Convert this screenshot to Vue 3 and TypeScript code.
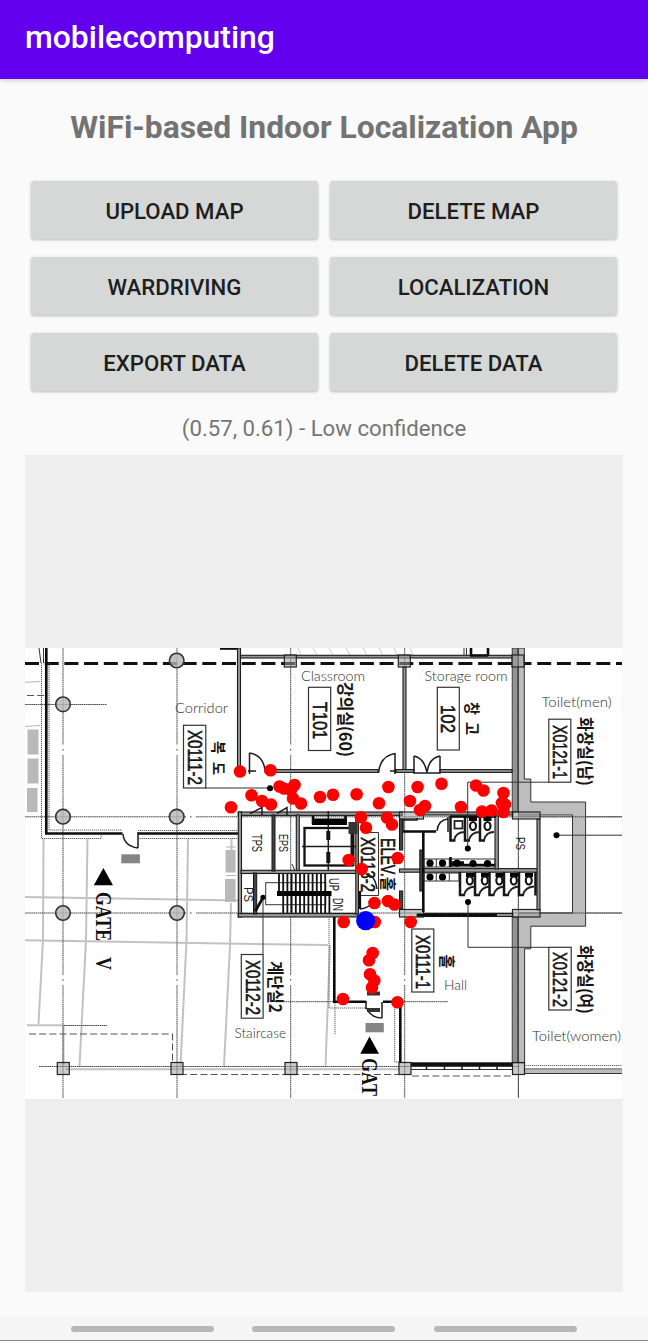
<script setup lang="ts">
interface PlanLabel {
  text: string
  x: number
  y: number
  length: number
  size: number
  kind: string
}

type Point = [number, number]
type Box = [number, number, number, number]

const actions: string[] = [
  'Upload map', 'Delete map', 'Wardriving', 'Localization', 'Export data', 'Delete data',
]

const samples: Point[] = [
  [240, 771.5], [270.5, 770.3], [231, 807.3], [279.5, 786.5], [284, 788.5], [294.5, 785], [291, 790],
  [251.5, 795.3], [262, 801], [271, 804.5], [293, 798.5], [301, 803.5], [320, 797], [333, 794.7],
  [356.6, 794.3], [379, 803.3], [388.4, 787], [417.6, 787], [410, 801], [441.5, 783.7], [476, 785.5],
  [483.5, 790.5], [503.5, 793], [461, 807], [425, 806], [420, 810], [502, 803], [505, 804.5],
  [482, 811.5], [491.5, 810.5], [503.5, 812], [361, 817.3], [366, 827.7], [387, 817.5], [392, 824.5],
  [348.7, 860], [397.7, 858], [361.7, 869], [374.5, 903], [388, 901], [394.5, 904.5], [343.7, 922],
  [374.8, 922], [410.7, 922], [372.7, 953], [369, 960.3], [370, 974.3], [374.3, 980.5], [372, 987.5],
  [343, 999], [397.5, 1002.2],
]

const columns: Point[] = [[176.7, 660.5], [63, 704.3], [63, 816.7], [176.7, 816.7], [63, 913], [177, 913]]
const piers: Box[] = [
  [284.3, 655, 12, 12], [398.3, 655, 12, 12], [512, 655, 12, 12], [57.3, 1062.5, 12, 12],
  [171, 1062.5, 12, 12], [285, 1062.5, 12, 12], [399, 1062.5, 12, 12], [512.5, 1062.5, 12, 12],
  [399.5, 812, 24, 7], [512.5, 812, 27.5, 7], [399.5, 909.5, 24, 7.5], [512.5, 909.5, 27.5, 7.5],
]
const axes: number[] = [63, 177, 290.7, 404.7, 518.4]
const greyBlocks: Box[] = [
  [27.5, 729.5, 11, 25], [27.5, 758.5, 11, 25], [27, 788, 10.5, 24], [225.5, 850, 10, 22.5], [225, 879, 10.5, 23],
]
const walls: Box[] = [
  [237.5, 648, 3, 122], [240.5, 655.3, 272, 2.7], [403, 667, 3, 103], [265, 769.6, 113, 2.8],
  [395, 769.6, 19, 2.8], [440, 769.6, 72, 2.8], [238.3, 812, 164, 3.4], [238.3, 812, 3.2, 105],
  [238.3, 913.5, 119, 3.5], [296.3, 815, 3, 56], [241, 870.3, 116, 3.2],
  [355.8, 816, 2.6, 98], [399.5, 869, 24, 3.2], [423, 868.6, 115, 3.6], [495, 816, 3.3, 53],
  [537, 819, 3, 91], [423, 812, 90, 3], [417, 913.5, 96, 3],
]
const solidWalls: Box[] = [
  [272, 815, 3, 56], [253.5, 873, 3.2, 41], [399.5, 819, 3.2, 31], [399.5, 891, 3.2, 18], [419.8, 850, 3.4, 41],
]
const roomBoxes: Box[] = [
  [183.5, 725.3, 22.3, 62.7], [308.5, 687.3, 22.2, 63.2], [437.3, 687.3, 22, 62.7],
  [548.8, 719.2, 22, 63], [241.3, 954.5, 21.8, 63.7], [411.8, 929, 22, 63], [548.8, 947.3, 22.4, 62.7],
]
const topStalls: number[] = [450.5, 465, 480]
const lowerStalls: number[] = [460, 475, 489.5, 504, 519]
const sinks: Point[] = [
  [430, 863.2], [442.5, 863.2], [457, 863.2], [473, 863.5], [487.5, 863.5], [430, 877], [442.5, 877],
]

const roomNames: PlanLabel[] = [
  { text: 'Corridor', x: 175, y: 713, length: 53, size: 14.5, kind: 'name' },
  { text: 'Classroom', x: 301, y: 681, length: 64, size: 14.5, kind: 'name' },
  { text: 'Storage room', x: 424.5, y: 681, length: 83, size: 14.5, kind: 'name' },
  { text: 'Toilet(men)', x: 541.5, y: 707, length: 70, size: 14.5, kind: 'name' },
  { text: 'Toilet(women)', x: 532, y: 1040.5, length: 89, size: 14.5, kind: 'name' },
  { text: 'Hall', x: 444, y: 989.5, length: 23, size: 14.5, kind: 'name' },
  { text: 'Staircase', x: 234.5, y: 1037.5, length: 51.5, size: 14.5, kind: 'name' },
]

// Labels printed sideways: x is the baseline, y the first letter's top end.
const sideLabels: PlanLabel[] = [
  { text: 'X0111-2', x: 187.5, y: 730, length: 55, size: 20, kind: 'code' },
  { text: 'T101', x: 312.5, y: 702, length: 37, size: 20, kind: 'code' },
  { text: '102', x: 441, y: 705, length: 28, size: 20, kind: 'code' },
  { text: 'X0121-1', x: 552.8, y: 725, length: 54, size: 20, kind: 'code' },
  { text: 'X0112-2', x: 245.5, y: 960, length: 55, size: 20, kind: 'code' },
  { text: 'X0111-1', x: 416, y: 935, length: 54, size: 20, kind: 'code' },
  { text: 'X0121-2', x: 552.8, y: 952, length: 55, size: 20, kind: 'code' },
  { text: 'X0113-2', x: 360.5, y: 837, length: 55, size: 20, kind: 'code' },
  { text: 'ELEV.', x: 381, y: 838, length: 39, size: 20, kind: 'code' },
  { text: '홀', x: 382, y: 877, length: 14, size: 16, kind: 'hangul' },
  { text: '복', x: 213, y: 741, length: 13, size: 15, kind: 'hangul' },
  { text: '도', x: 213, y: 762, length: 13, size: 15, kind: 'hangul' },
  { text: '강의실(60)', x: 338.5, y: 682, length: 75, size: 17.5, kind: 'hangul' },
  { text: '창', x: 465.5, y: 702, length: 13, size: 16, kind: 'hangul' },
  { text: '고', x: 465.5, y: 722, length: 13, size: 16, kind: 'hangul' },
  { text: '화장실(남)', x: 578.5, y: 717, length: 69, size: 17, kind: 'hangul' },
  { text: '화장실(여)', x: 578.5, y: 945, length: 69, size: 17, kind: 'hangul' },
  { text: '계단실2', x: 269, y: 961, length: 52, size: 17, kind: 'hangul' },
  { text: '홀', x: 440.5, y: 954.5, length: 14, size: 16, kind: 'hangul' },
  { text: 'TPS', x: 251.5, y: 834, length: 18, size: 14, kind: 'small' },
  { text: 'EPS', x: 279, y: 834, length: 18, size: 13, kind: 'small' },
  { text: 'PS', x: 243.5, y: 887, length: 15, size: 13, kind: 'small' },
  { text: 'UP', x: 328.5, y: 878, length: 13, size: 14, kind: 'small' },
  { text: 'DN', x: 333, y: 898, length: 13, size: 14, kind: 'small' },
  { text: 'PS', x: 516, y: 837, length: 13, size: 12, kind: 'small' },
  { text: 'GATE', x: 95.5, y: 892, length: 49, size: 23, kind: 'gate' },
  { text: 'V', x: 95.5, y: 957, length: 13, size: 23, kind: 'gate' },
  { text: 'GAT', x: 361.5, y: 1058, length: 38, size: 23, kind: 'gate' },
]
</script>

<template>
  <div class="screen">
    <header class="app-bar">mobilecomputing</header>
    <main class="content">
      <h1 class="title">WiFi-based Indoor Localization App</h1>
      <div class="actions">
        <button v-for="a in actions" :key="a" type="button" class="action">{{ a }}</button>
      </div>
      <p class="status">(0.57, 0.61) - Low confidence</p>
      <div class="map-view">
        <svg class="map" width="598" height="451" viewBox="25 648 598 451">
          <rect x="25" y="648" width="597.3" height="451" fill="#fff" />

          <!-- Outdoor paving and parking lines -->
          <g class="paving">
            <path d="M43.5 839L43 940L38.5 1024M87.5 839L86 940L79.5 1066M188 839L186.5 940L180.5 1066M231.5 839V850M231 903L230 945L224 1066M330 945L325.5 1066" />
            <path d="M25 897L240 900.5M25 940.3L240 943.7L328 945M27 1025.3H64M63.5 1025V1065M66 1069.3H400" />
          </g>
          <path class="fine-grey" d="M25 682.3L40 681.5M25 726.5L40 725.5M226 847H236M226 875.5H236M226 901H236" />
          <path class="hatch" d="M298 648l3 7M313 648l4 7M329 648l4 7M346 648l4 7M363 648l4 7M379 648l4 7M394 648l3 7M410 648l3 7" />
          <rect v-for="(b, i) in greyBlocks" :key="'g' + i" :x="b[0]" :y="b[1]" :width="b[2]" :height="b[3]" fill="#b9b9b9" />

          <!-- Structural axes -->
          <path v-for="x in axes" :key="x" class="axis" :d="`M${x} 648V745M${x} 749v2M${x} 755V975M${x} 979v2M${x} 985V1098`" />
          <path class="axis" d="M25 704.5H107M25 816.8H186M190 816.8h2M196 816.8H622M25 913H186M190 913h2M196 913H622M64 1025.5H107M275 1001.7H334M400 1001.7H448M39 1066.5H520" />
          <path class="long-dash" d="M25 663.4H622" />
          <path class="short-dash" d="M29 1034H172.5V1064M180 1074.5H400M412 1076H512M27 695.5H45" />

          <!-- Corridor room -->
          <path class="thick" d="M46.3 648V833.5H122.5M138 833.5H238" />
          <path class="thin" d="M39 648L41 663M43.5 648V663" />
          <path class="dotted" d="M41.5 663V838.5H101V834M138 838.5H238M49 663V830H122M138 830.5H238" />
          <path class="door" d="M138 832V848M123 834Q124 846 138 848" />
          <rect x="121.3" y="854.3" width="18.6" height="9" fill="#858585" />
          <path class="thick" d="M220 648.5H238" />

          <!-- Outer grey shell -->
          <path class="shell" d="M518.5 648H524.3V779H530.8V802H585.6V926.2H530.8V948.8H524.6V1063H518.5V913H572.5V815H518.5Z" />
          <rect x="512.2" y="648" width="5.6" height="164" class="dark-shell" />
          <rect x="512.2" y="917" width="5.6" height="146" class="dark-shell" />
          <path class="axis" d="M518.4 648V1098M518 816.8H622M518 913H622" />
          <path class="thin" d="M524 1069H622M524 1073.5H622" />
          <rect x="524" y="1070" width="98" height="3" fill="#bbb" />
          <path class="dotted" d="M524 1065.5H622" />

          <!-- Internal walls -->
          <rect v-for="(w, i) in walls" :key="'w' + i" :x="w[0]" :y="w[1]" :width="w[2]" :height="w[3]" class="wall" />
          <rect v-for="(w, i) in solidWalls" :key="'sw' + i" :x="w[0]" :y="w[1]" :width="w[2]" :height="w[3]" class="solid-wall" />
          <rect v-for="(p, i) in piers" :key="'p' + i" :x="p[0]" :y="p[1]" :width="p[2]" :height="p[3]" class="pier" />
          <circle v-for="(c, i) in columns" :key="'c' + i" :cx="c[0]" :cy="c[1]" r="7.3" class="column" />
          <path class="door" d="M249.5 753V774M249.5 753Q263 755 265 770M248 771H256M395 753V774M395 753.5Q380 756 378.5 773M390 771H397M414 756V773H440V756M414 756Q424 758 427 772Q429 758 440 756" />
          <path class="thin" d="M464 648V655M466.5 648V655" />
          <path class="thick" d="M471 648V656M488 648V656M470 655.5H488" />

          <!-- Lift and stairwell -->
          <path class="door" d="M250 813.5L262 807.5V815M277 813.5L287 807.5V815" />
          <rect x="304.5" y="828" width="48" height="37.5" class="lift" />
          <path class="door" d="M328.3 811V870M302 846.5H356" />
          <rect x="312" y="818.5" width="35" height="6.5" />
          <path class="thick" d="M313 815.5V824M345.5 815.5V824" />
          <path class="lift-rail" d="M328.3 831V840M328.3 852V863" />
          <path class="lift-rail" d="M352.5 822V866" />
          <rect x="348.5" y="822" width="9" height="12" fill="#333" />
          <rect x="265.7" y="882.7" width="60" height="22" class="outline" />
          <path class="treads" d="M279 874V892M283.2 874V913M287.4 874V913M291.6 874V913M295.8 874V913M300 874V913M304.2 874V913M308.4 874V913M312.6 874V913M316.8 874V913M321 874V913M325.2 874V913M329.4 892V913" />
          <rect x="277" y="891" width="54.5" height="5" />
          <path class="thick" d="M263 897.5L255.5 911" />
          <path class="thin" d="M263 898V954M366 832.5H378.5V895.5H359M292 864l3 7" />
          <path class="thick" d="M359.8 891V909" />
          <path class="door" d="M366 874Q375 875 377 889M360 909Q370 908 373 901" />

          <!-- Washrooms -->
          <path class="thick" d="M403 831.5H436M423.3 831V912" />
          <path class="door" d="M403 831V820H417V818M437 831Q438 820 448 819M448 817V832" />
          <path v-for="x in topStalls" :key="'t' + x" class="partition" :d="`M${x} 816V840.5h5`" />
          <path class="stall-door" d="M454 840Q456 832 465 832M469 840Q471 832 480 832M484 840Q486 832 494 832" />
          <rect x="454.5" y="821" width="8" height="7.5" class="basin" />
          <path class="thick" d="M450 816.5H496" />
          <g v-for="x in [473, 487.5]" :key="'u' + x" class="toilet">
            <rect :x="x - 4" y="817" width="8" height="4" />
            <ellipse :cx="x" cy="826" rx="3" ry="4" />
          </g>
          <path class="partition" d="M535.5 872V895.5" />
          <g v-for="x in lowerStalls" :key="'l' + x">
            <path class="partition" :d="`M${x} 872V895h5`" />
            <g class="toilet">
              <rect :x="x + 6" y="873" width="8" height="4" />
              <ellipse :cx="x + 9.8" cy="880.5" rx="3" ry="4" />
            </g>
            <path class="stall-door" :d="`M${x + 4} 895q2 -8 11 -8.5`" />
          </g>
          <rect x="424" y="859" width="71" height="8" class="outline" />
          <rect x="424" y="873" width="35" height="8" class="outline" />
          <path class="outline" d="M436.3 859V867M449.3 859V867M436.3 873V881M449.3 873V881" />
          <path class="thick" d="M450.5 857V867M450 862.5H464M450 865H495" />
          <circle v-for="(s, i) in sinks" :key="'s' + i" :cx="s[0]" :cy="s[1]" r="3.6" />
          <path class="thick" d="M417 915.3H497" />

          <!-- Hall and south entrance -->
          <path class="thick" d="M334.3 917V1001.8H366M383 1001.8H400.3V1063" />
          <path class="dotted" d="M329 917V1008H366M335 1003V1035M394.7 1003V1062H400" />
          <path class="door" d="M366 1001V1009M382 1002V1018M366.5 1008Q371 1018 382 1018" />
          <rect x="367" y="991.5" width="13" height="4" fill="#333" />
          <rect x="367" y="1008" width="13" height="4" fill="#333" />
          <rect x="365.5" y="1023" width="18.3" height="9.3" fill="#858585" />
          <rect x="411" y="1062.3" width="101" height="4.2" fill="#111" />
          <path class="thin" d="M411 1069.5H512" />
          <path class="door" d="M426.5 1066V1070M444.5 1066V1070M462 1066V1070M479.5 1066V1070M497 1066V1070" />
          <path d="M103.4 868L113 885.3H93.8ZM369.5 1036.5L379 1053.7H360.3Z" />

          <!-- Leaders and room tags -->
          <path class="thin" d="M205 788H270M549 782.2H467.7V848M556.5 835.2H622M468 902V947.3H549" />
          <circle cx="270" cy="788.2" r="3" /><circle cx="467.8" cy="848.6" r="3" />
          <circle cx="556.5" cy="835.2" r="3" /><circle cx="468" cy="902" r="3" /><circle cx="263" cy="897.3" r="2.6" />
          <rect v-for="(b, i) in roomBoxes" :key="'r' + i" :x="b[0]" :y="b[1]" :width="b[2]" :height="b[3]" class="tag" />
          <text
            v-for="(l, i) in sideLabels" :key="'sl' + i" :class="l.kind" :font-size="l.size"
            :transform="`translate(${l.x} ${l.y}) rotate(90)`" :textLength="l.length" lengthAdjust="spacingAndGlyphs"
          >{{ l.text }}</text>
          <text
            v-for="l in roomNames" :key="l.text" :class="l.kind" :font-size="l.size" :x="l.x" :y="l.y"
            :textLength="l.length" lengthAdjust="spacingAndGlyphs"
          >{{ l.text }}</text>

          <!-- Collected samples and the estimated position -->
          <circle v-for="(p, i) in samples" :key="'d' + i" :cx="p[0]" :cy="p[1]" r="6.3" fill="#f00" />
          <circle cx="365.7" cy="920.7" r="9.6" fill="#00f" />
        </svg>
      </div>
    </main>
    <footer class="nav-bar">
      <span class="pill"></span><span class="pill"></span><span class="pill"></span>
    </footer>
  </div>
</template>

<style>
body { margin: 0; background: #fafafa; }
</style>

<style scoped>
.screen {
  width: 648px;
  height: 1341px;
  display: flex;
  flex-direction: column;
  background: #fafafa;
  font-family: Roboto, "Liberation Sans", sans-serif;
  overflow: hidden;
}
.app-bar {
  height: 79px;
  box-sizing: border-box;
  padding: 0 25px 5px;
  display: flex;
  align-items: center;
  flex: none;
  background: #6200ee;
  color: #fff;
  font-size: 31.9px;
  font-weight: 500;
  box-shadow: 0 1px 5px rgba(0, 0, 0, 0.22);
}
.content {
  flex: 1;
  display: flex;
  flex-direction: column;
  padding: 0 25px;
}
.title {
  margin: 26px 0 0;
  height: 44px;
  line-height: 44px;
  text-align: center;
  white-space: nowrap;
  font-size: 31.8px;
  font-weight: 700;
  color: #737373;
}
.actions {
  margin: 32px 6px 0;
  display: grid;
  grid-template-columns: 1fr 1fr;
  gap: 18px 12px;
}
.action {
  height: 58px;
  padding: 1px 0 0;
  border: 0;
  border-radius: 3px;
  background: #d6d8d7;
  color: #1e1e1e;
  font: 500 22.2px Roboto, "Liberation Sans", sans-serif;
  text-transform: uppercase;
  box-shadow: 0 1px 3px rgba(0, 0, 0, 0.26);
}
.status {
  margin: 22px 0 0;
  height: 30px;
  line-height: 30px;
  text-align: center;
  font-size: 22.2px;
  color: #757575;
}
.map-view {
  margin-top: 12px;
  height: 837px;
  display: flex;
  align-items: center;
  background: #eee;
}
.map { display: block; }
.nav-bar {
  height: 24px;
  box-sizing: border-box;
  flex: none;
  display: flex;
  gap: 38.4px;
  padding: 9px 0 0 71px;
  background: #f5f5f5;
  border-bottom: 1px solid #8c8c8c;
}
.pill { width: 143px; height: 6px; border-radius: 3px; background: #b7b7b7; }

.map path, .map .outline, .map .tag { fill: none; }
.map path:not([class]) { fill: #000; }
.map .paving path { fill: none; stroke: #c2c2c2; stroke-width: 2; }
.fine-grey { stroke: #b5b5b5; stroke-width: 1; }
.hatch { stroke: #bbb; stroke-width: 0.8; }
.axis { stroke: #484848; stroke-width: 1; stroke-dasharray: 1.6 0.5; }
.long-dash { stroke: #111; stroke-width: 3; stroke-dasharray: 14 5.7; }
.short-dash { stroke: #555; stroke-width: 1.1; stroke-dasharray: 7 3.2; }
.dotted { stroke: #555; stroke-width: 0.9; stroke-dasharray: 1.3 0.7; }
.thick { stroke: #0c0c0c; stroke-width: 2.6; }
.thin { stroke: #333; stroke-width: 1; }
.door { stroke: #1c1c1c; stroke-width: 1.5; }
.map .shell { fill: #bdbdbd; stroke: #333; stroke-width: 1; }
.dark-shell { fill: #929292; stroke: #333; stroke-width: 0.9; }
.wall { fill: #989898; stroke: #1c1c1c; stroke-width: 1.1; }
.solid-wall { fill: #444; stroke: #151515; stroke-width: 1; }
.pier { fill: #a0a0a0; fill-opacity: 0.55; stroke: #222; stroke-width: 1.2; }
.column { fill: #b4b4b4; fill-opacity: 0.8; stroke: #333; stroke-width: 1.6; }
.lift { fill: none; stroke: #111; stroke-width: 2.3; }
.lift-rail { stroke: #151515; stroke-width: 4; }
.outline { stroke: #333; stroke-width: 1; }
.treads { stroke: #111; stroke-width: 1.8; }
.partition { stroke: #151515; stroke-width: 2.5; }
.stall-door { stroke: #222; stroke-width: 1.8; }
.basin { fill: #fff; stroke: #222; stroke-width: 1.8; }
.toilet ellipse { fill: #fff; stroke: #111; stroke-width: 2.1; }
.tag { stroke: #333; stroke-width: 1.2; }
.code { font-family: "Liberation Sans", sans-serif; fill: #151515; stroke: #151515; stroke-width: 0.6; }
.hangul { font-family: "Noto Sans CJK KR", sans-serif; font-weight: 700; fill: #151515; }
.small { font-family: "Liberation Sans", sans-serif; fill: #222; }
.gate { font-family: "Liberation Serif", serif; font-weight: 700; fill: #111; }
.name { font-family: Lato, sans-serif; font-weight: 300; fill: #2e2e2e; }
</style>
